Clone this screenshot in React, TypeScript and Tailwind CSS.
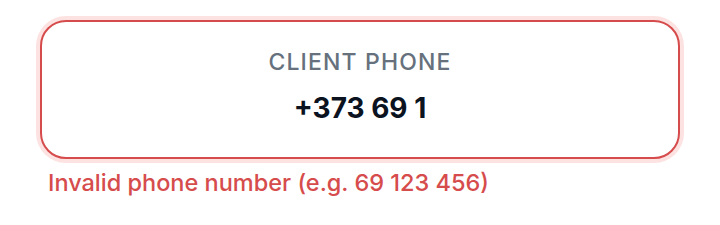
const App = () => {
  return (
    <div className="min-h-[225px] bg-white px-10 pt-5 font-['Inter',sans-serif]">
      <div className="flex h-[139px] flex-col items-center gap-4 rounded-[26px] border-2 border-[#d64c4c] bg-white pt-[26px] ring-4 ring-[#fde2e2]">
        <span className="text-[23px] font-medium leading-7 tracking-[0.05em] text-[#66717d]">
          CLIENT PHONE
        </span>
        <span className="text-[28px] font-bold leading-8 text-[#0b1220]">
          +373 69 1
        </span>
      </div>
      <p className="mt-[10px] pl-2 text-[23.5px] font-medium leading-7 text-[#d64c4c]">
        Invalid phone number (e.g. 69 123 456)
      </p>
    </div>
  );
};

export default App;
